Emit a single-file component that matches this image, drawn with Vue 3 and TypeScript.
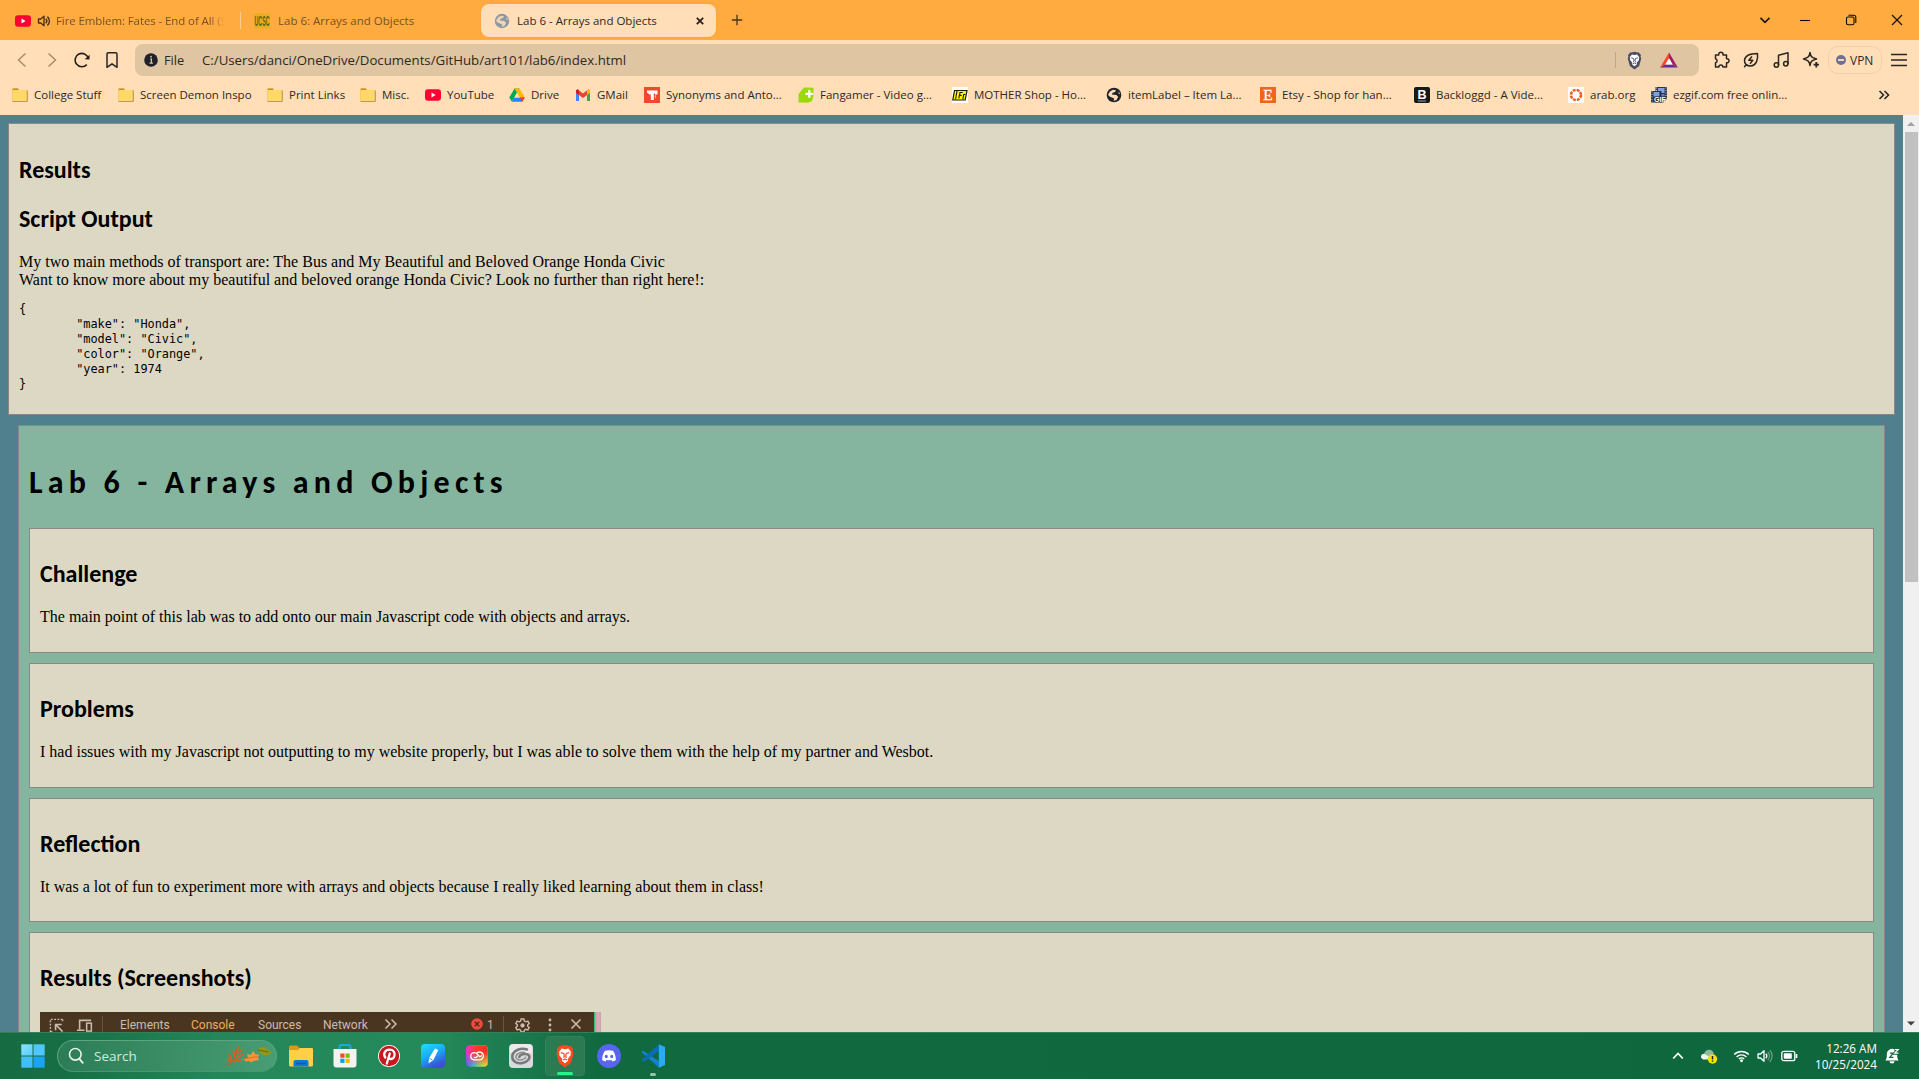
<script setup lang="ts">
interface Glyph {
  box: string
  body: string
}

const line = 'fill="none" stroke="#2b2622" stroke-width="1.5" stroke-linecap="round" stroke-linejoin="round"'
const youtube = '<rect x="0" y="2.2" width="16" height="11.6" rx="3" fill="#ff0033"/><path d="M6.5 5.6v4.8L10.6 8z" fill="#fff"/>'
const folder = '<path d="M.5 1.500h5.400l1.200 1.500h8.400v11H.5z" fill="#d8a02c"/><rect x=".5" y="3" width="14.400" height="11.500" rx="1" fill="#ffd968"/><path d="M.5 14.500h14.800V4" fill="none" stroke="#b89a5c" stroke-width="1"/><path d="M1 2.300h5" stroke="#c98f1c" stroke-width="1.400"/>'
const lion = (mane: string) =>
  `<path d="M12 1l4 1 1-.3 3.200 3.400-.6 1.800.9 2.600-2.600 9.600L12 23.400l-5.900-4.300L3.500 9.500l.9-2.600-.6-1.800L7 1.700l1 .3z" fill="${mane}"/><path d="M12 5.200l3.300-.7 2.700 3.400-.5 1.700.3 1.500-3.200 4.200.6 1.500L12 19.300l-3.200-2.500.6-1.500-3.200-4.200.3-1.500-.5-1.700 2.700-3.400z" fill="#fff"/><path d="M7.800 8.600l3 .9.500 2.600-.7 1.700M16.200 8.600l-3 .9-.5 2.600.7 1.700M10 16l2-1 2 1" fill="none" stroke="${mane}" stroke-width="1.200"/>`

const glyphs: Record<string, Glyph> = {
  youtube: { box: '0 0 16 16', body: youtube },
  folder: { box: '0 0 16 16', body: folder },
  speaker: { box: '0 0 14 14', body: '<path d="M1.500 5H3.800L7 2.300v9.400L3.800 9H1.500z" fill="none" stroke="#4a3215" stroke-width="1.400" stroke-linejoin="round"/><path d="M8.800 4.800a3.200 3.200 0 010 4.400M10.400 2.600a5.800 5.800 0 010 8.800" fill="none" stroke="#4a3215" stroke-width="1.400"/>' },
  ucsc: { box: '0 0 16 16', body: '<rect y=".5" width="16" height="15" fill="#e8ae1c"/><text x="8" y="13" text-anchor="middle" textLength="15" lengthAdjust="spacingAndGlyphs" font-family="Liberation Sans" font-weight="700" font-size="14" fill="#5c6426">UCSC</text>' },
  globe: { box: '0 0 16 16', body: '<circle cx="8" cy="8" r="7.200" fill="#8d97a3"/><path d="M4 4.600l3-1.800 3 .5-1 1.700-2.300.8L5.800 7.500l4.600.6 1.800 2-1.600 2.600-3 1.300.6-2.600-4.600-2L2 7.800z" fill="#fddeb8" opacity=".85"/><path d="M12.300 4l1.800 2.500-1.500.6z" fill="#fddeb8" opacity=".85"/>' },
  darkglobe: { box: '0 0 16 16', body: '<circle cx="8" cy="8" r="7.300" fill="#20242a"/><path d="M4 4.600l3-1.800 3 .5-1 1.700-2.300.8L5.800 7.500l4.600.6 1.800 2-1.600 2.600-3 1.300.6-2.600-4.600-2L2 7.800z" fill="#fdddb6"/><path d="M12.500 4.500l1.600 2-1.300.6z" fill="#fdddb6"/>' },
  drive: { box: '0 0 16 16', body: '<path d="M5.500 1.500h5L5.200 10.700 2.700 14.500.3 10.500z" fill="#00a850"/><path d="M5.500 1.500h5l5.300 9h-5z" fill="#ffba00"/><path d="M5.200 10.500h10.600l-2.500 4.200H2.700z" fill="#2684fc"/><path d="M15.800 10.500h-5l2.500 4.200z" fill="#ea4335"/><path d="M8 5.800l2.700 4.700H5.300z" fill="#fddeb8"/>' },
  gmail: { box: '0 0 16 16', body: '<path d="M1 4v10h3V7z" fill="#4285f4"/><path d="M15 4v10h-3V7z" fill="#34a853"/><path d="M1 3.500l1.600-1.300L8 6.400l5.400-4.200L15 3.500V5.700L8 11 1 5.700z" fill="#ea4335"/><path d="M12 3.300l1.400-1.100L15 3.500v2.200L12 8z" fill="#fbbc04"/><path d="M1 3.500v2.200L4 8V3.300L2.600 2.200z" fill="#c5221f"/>' },
  thesaurus: { box: '0 0 16 16', body: '<rect width="16" height="16" fill="#f4482c"/><path d="M3 3.500h10.500v4H11v-1H9.800V13H6.800V7.500H5.500L3 5.500z" fill="#fff"/><path d="M10.500 9l1.500-1v4z" fill="#fff" opacity=".6"/>' },
  fangamer: { box: '0 0 16 16', body: '<path d="M6 .5L15.500.8V9l-1.500 5-4 1.800L.5 15.500V7z" fill="#9bd90a"/><path d="M10.200 3h2.200v2.800h2.800V8h-2.800v2.800h-2.200V8H7.400V5.800h2.800z" fill="#fff"/>' },
  mother: { box: '0 0 16 16', body: '<rect width="16" height="16" fill="#fff"/><path d="M2.500 3.500H15l-1.800 9.500H.8z" fill="#fff200" stroke="#1c1c00" stroke-width="1.200"/><path d="M5 4L3.500 12.500M6.800 11.300L8 5.500h2.600M7.400 8.400h2.300M10.800 12.500l.9-5h1.600" stroke="#1c1c00" stroke-width="1.100" fill="none"/>' },
  etsy: { box: '0 0 16 16', body: '<rect width="16" height="16" fill="#f1641e"/><text x="8" y="13.300" text-anchor="middle" font-family="Liberation Serif" font-size="15.500" fill="#fff" stroke="#fff" stroke-width=".3">E</text>' },
  backloggd: { box: '0 0 16 16', body: '<rect width="16" height="16" rx="2" fill="#16181c"/><text x="8" y="12" text-anchor="middle" font-family="Liberation Sans" font-weight="700" font-size="12.500" fill="#fff">B</text><path d="M4 14h8" stroke="#8fa3ad"/>' },
  arab: { box: '0 0 16 16', body: '<rect width="16" height="16" fill="#fff"/><circle cx="8" cy="8" r="5" fill="none" stroke="#ee5a24" stroke-width="2.600" stroke-dasharray="2.900 1.030"/>' },
  ezgif: { box: '0 0 16 16', body: '<rect x="4.500" y="0" width="11.500" height="12" fill="#2b3540"/><rect x="7" y="1" width="6.500" height="5" fill="#7da3d8"/><rect x="7" y="7" width="6.500" height="4" fill="#5b80bc"/><path d="M15 .5v12M5.500 .5v12" stroke="#d6dde4" stroke-dasharray="1 1.500"/><rect x="0" y="4" width="10.500" height="11.500" fill="#2b3540"/><rect x="2.500" y="5" width="5.800" height="4.500" fill="#7da3d8"/><path d="M1 4.500v10.500" stroke="#d6dde4" stroke-dasharray="1 1.500"/><text x="9" y="15.300" text-anchor="middle" font-family="Liberation Sans" font-weight="700" font-size="7.200" fill="#fff" stroke="#1f2730" stroke-width=".8" paint-order="stroke">GIF</text>' },
  back: { box: '0 0 16 16', body: '<path d="M11.500 1.500L4.500 8l7 6.500" fill="none" stroke="#a88c6c" stroke-width="1.500"/>' },
  forward: { box: '0 0 16 16', body: '<path d="M4.500 1.500l7 6.500-7 6.500" fill="none" stroke="#a88c6c" stroke-width="1.500"/>' },
  reload: { box: '0 0 16 16', body: '<path d="M12.800 12.600A6.700 6.700 0 1 1 14.300 6.200" fill="none" stroke="#241f1c" stroke-width="1.600"/><path d="M10.700 7.200l4.800.400.100-4.800z" fill="#241f1c"/>' },
  bookmark: { box: '0 0 16 16', body: `<path d="M3 2.200a1.500 1.500 0 011.500-1.500h7a1.500 1.500 0 011.500 1.500V15.300L8 11.800 3 15.300z" ${line}/>` },
  info: { box: '0 0 14 14', body: '<circle cx="7" cy="7" r="6.800" fill="#1f2028"/><path d="M6 6h1.400v4M5.500 10.200h3.400" stroke="#dfc5a2" stroke-width="1.200" fill="none"/><circle cx="7" cy="3.700" r=".9" fill="#dfc5a2"/>' },
  shield: { box: '0 0 24 24', body: lion('#4b4e63') },
  bat: { box: '0 0 20 18', body: '<path d="M10 .5L0 17.500l6-3.500 4-7z" fill="#ff4724"/><path d="M10 .5l10 17-6-3.500-4-7z" fill="#9e1f63"/><path d="M0 17.500h20L14 14H6z" fill="#662d91"/><path d="M10 7l4.200 7.200H5.800z" fill="#fff"/>' },
  puzzle: { box: '0 0 18 18', body: `<path d="M3.500 4h3.300a2.200 2.200 0 114.200 0h3.500v3.700a2.100 2.100 0 110 4.100V16h-3.600a2 2 0 00-4 0H3.500v-4.200a2.100 2.100 0 000-4.100z" ${line}/>` },
  leaf: { box: '0 0 18 18', body: `<path d="M15.500 2.500c.6 5.500-.8 12-7 12.500-4 0-6.200-2.500-6-5.700C3 4.500 8.500 2.500 15.500 2.500zM4.300 13.500L2.500 15.700" ${line}/><path d="M10 5.500L6.800 9.300h4L8 12.700" fill="none" stroke="#2b2622" stroke-width="1.500" stroke-linejoin="round"/>` },
  music: { box: '0 0 18 18', body: `<path d="M6.500 14V4.200L16 1.800V12.500" ${line}/><circle cx="4.400" cy="14" r="2.200" ${line}/><circle cx="13.800" cy="12.800" r="2.200" ${line}/>` },
  sparkle: { box: '0 0 18 18', body: `<path d="M8 1.500c.7 4 1.500 5 6.500 6.500-5 1.400-5.800 2.400-6.500 6.500-.7-4.100-1.500-5.100-6.500-6.500C6.500 6.500 7.300 5.500 8 1.500z" ${line}/><path d="M14.300 11v5.400M11.600 13.700H17" stroke="#2b2622" stroke-width="1.800"/>` },
  burger: { box: '0 0 18 14', body: '<path d="M1 1.500h16M1 7h16M1 12.500h16" stroke="#2b2622" stroke-width="1.500"/>' },
  close: { box: '0 0 12 12', body: '<path d="M2.800 2.800l6.400 6.400M9.200 2.800L2.800 9.200" stroke="#2a221c" stroke-width="1.800"/>' },
  plus: { box: '0 0 12 12', body: '<path d="M6 .8v10.400M.8 6h10.400" stroke="#4d3518" stroke-width="1.300"/>' },
  down: { box: '0 0 12 12', body: '<path d="M1.500 3.800L6 8.300l4.500-4.500" fill="none" stroke="#1f1608" stroke-width="1.700"/>' },
  minimize: { box: '0 0 12 12', body: '<path d="M1 6.500h10" stroke="#100a00" stroke-width="1.100"/>' },
  restore: { box: '0 0 12 12', body: '<rect x="1.500" y="3" width="7.500" height="7.800" rx="1.500" fill="none" stroke="#100a00" stroke-width="1.100"/><path d="M3.500 1.300h5.300a2 2 0 012 2V9" fill="none" stroke="#100a00" stroke-width="1.100"/>' },
  exit: { box: '0 0 12 12', body: '<path d="M1 1l10 10M11 1L1 11" stroke="#100a00" stroke-width="1.100"/>' },
  more: { box: '0 0 12 12', body: '<path d="M1.500 2l4 4-4 4M6.500 2l4 4-4 4" fill="none" stroke="#2b2622" stroke-width="1.600"/>' },
  inspect: { box: '0 0 16 16', body: '<path d="M1.500 15V1.500H15" fill="none" stroke="#cbbcae" stroke-width="1.500" stroke-dasharray="2 1.500"/><path d="M14.500 1.500V5M1.500 14.500H5" stroke="#cbbcae" stroke-width="1.500" stroke-dasharray="2 1.500"/><path d="M7 13V7h6.500M7.500 7.500l7 7" fill="none" stroke="#cbbcae" stroke-width="1.700"/>' },
  device: { box: '0 0 17 16', body: '<path d="M15.500 2.500H3.300v9.500M.5 13h8" fill="none" stroke="#cbbcae" stroke-width="1.700"/><rect x="10.800" y="5.500" width="5" height="8.500" fill="none" stroke="#cbbcae" stroke-width="1.600"/>' },
  chevrons: { box: '0 0 14 12', body: '<path d="M1.500 1.500L6 6l-4.500 4.500M7.500 1.500L12 6l-4.500 4.500" fill="none" stroke="#cbbcae" stroke-width="1.500"/>' },
  error: { box: '0 0 12 12', body: '<circle cx="6" cy="6" r="5.800" fill="#f04a3e"/><path d="M3.800 3.800l4.400 4.400M8.200 3.800L3.800 8.200" stroke="#4a2a1c" stroke-width="1.300"/>' },
  gear: { box: '0 0 16 16', body: '<path d="M6.500 1h3l.5 2.200 1.500.9 2.200-.7 1.400 2.500L13.500 7.300v1.500l1.600 1.400-1.400 2.500-2.200-.7-1.500.9L9.500 15h-3L6 12.900l-1.500-.9-2.200.7L.9 10.200l1.600-1.400V7.300L.9 5.900l1.400-2.500 2.200.7L6 3.200z" fill="none" stroke="#cbbcae" stroke-width="1.500"/><circle cx="8" cy="8" r="2.300" fill="#cbbcae"/>' },
  dots: { box: '0 0 4 14', body: '<g fill="#cbbcae"><circle cx="2" cy="2" r="1.400"/><circle cx="2" cy="7" r="1.400"/><circle cx="2" cy="12" r="1.400"/></g>' },
  cross: { box: '0 0 12 12', body: '<path d="M1.500 1.500l9 9M10.500 1.500l-9 9" stroke="#cbbcae" stroke-width="1.600"/>' },
  windows: { box: '0 0 24 24', body: '<defs><linearGradient id="win" x1="0" y1="0" x2="1" y2="1"><stop offset="0" stop-color="#8be4ff"/><stop offset="1" stop-color="#5accfa"/></linearGradient></defs><rect x=".3" y=".3" width="11.200" height="11.200" fill="url(#win)"/><rect x="12.500" y=".3" width="11.200" height="11.200" fill="#4fc7fb"/><rect x=".3" y="12.500" width="11.200" height="11.200" fill="#3fbffb"/><rect x="12.500" y="12.500" width="11.200" height="11.200" fill="#1ba4f5"/>' },
  search: { box: '0 0 16 18', body: '<circle cx="7.300" cy="7.300" r="5.800" fill="none" stroke="#e6f3ea" stroke-width="1.600"/><path d="M11.200 11.700l4 4.600" stroke="#e6f3ea" stroke-width="1.800"/>' },
  leaves: { box: '0 0 46 22', body: '<path d="M1.500 20.500c4-3 8-8 10-17" fill="none" stroke="#c9581c" stroke-width="1.100"/><path d="M3 9.500l2.500 5.500M7.300 5.500l1.200 6M12 2l-1 4M16 4.500l-5 4M17 9.500l-7 3.500M14.500 15l-7 1.500M2 14l2.500 3.500" stroke="#d5601f" stroke-width="1.900" stroke-linecap="round"/><path d="M18 14l4-1.500-1-3.500 3.500 1 3-4 1.500 3 4.500 1-2 2.500 1.500 2.500-5 1-3 1.500-2-1.500-3.500.5z" fill="#f7943a"/><path d="M14.500 15l3.500-1L31 11.500" fill="none" stroke="#d97420" stroke-width="1"/><path d="M31.500 4.500c3-3 7-2.500 9.500-1L45.500 7c-2 3-5 4.500-8 3-2-.5-3-1.500-6-5.500z" fill="#91981a"/><path d="M31.500 5l11 2" stroke="#5f6d12" stroke-width="1"/>' },
  explorer: { box: '0 0 24 24', body: '<path d="M0 3a1.500 1.500 0 011.500-1.500H8L10.500 4H22v6H0z" fill="#d99a16"/><path d="M0 6h9l2-2h12a1 1 0 011 1v16a1.500 1.500 0 01-1.500 1.500h-21A1.500 1.500 0 010 21z" fill="#ffcf48"/><path d="M4.500 22.500V18a2 2 0 012-2h11a2 2 0 012 2v4.500z" fill="#0f78cf"/><path d="M7 19.500h10" stroke="#0b5ba5" stroke-width="1.500"/>' },
  store: { box: '0 0 24 24', body: '<path d="M6.500 6V3a2 2 0 012-2h7a2 2 0 012 2v3" fill="none" stroke="#1fa4ea" stroke-width="2"/><path d="M.5 5h23v15.500a3 3 0 01-3 3h-17a3 3 0 01-3-3z" fill="#f3f3f1"/><path d="M7.300 9.500h4.200v4.200H7.300z" fill="#f04e26"/><path d="M12.500 9.500h4.200v4.200h-4.200z" fill="#7fb80e"/><path d="M7.300 14.700h4.200v4.200H7.300z" fill="#03a2ec"/><path d="M12.500 14.700h4.200v4.200h-4.200z" fill="#fbb604"/>' },
  pinterest: { box: '0 0 24 24', body: '<circle cx="12" cy="12" r="11" fill="#fff"/><circle cx="12" cy="12" r="10.200" fill="#c8171e"/><path d="M8.300 13.500C5.800 10 8 5.700 12.500 5.700c4 0 5.800 3 5 6-.8 3.400-4.500 4.200-5.700 2.200M12.800 9.500L9.800 19.500" fill="none" stroke="#fff" stroke-width="2.300" stroke-linecap="round"/>' },
  pen: { box: '0 0 24 24', body: '<defs><linearGradient id="ink" x1="0" y1="0" x2=".5" y2="1"><stop offset="0" stop-color="#1fe0ff"/><stop offset=".55" stop-color="#1aa6f5"/><stop offset="1" stop-color="#3c50d8"/></linearGradient></defs><rect width="24" height="24" rx="4" fill="url(#ink)"/><path d="M14 4.500l3.300 1.600L12.500 16l-5 3.500.6-5.500z" fill="#fff"/><path d="M8.500 14.300l3 1.700" stroke="#37a8f0"/><path d="M10 20c3 1 5-1 8-.5" fill="none" stroke="#2b62d8" stroke-width="1.500"/>' },
  cloud: { box: '0 0 24 24', body: '<defs><linearGradient id="cct" x1="0" y1="0" x2="1" y2="0"><stop offset="0" stop-color="#f92fc5"/><stop offset=".45" stop-color="#ff3a2a"/><stop offset="1" stop-color="#ff2a2a"/></linearGradient><linearGradient id="ccb" x1="0" y1="0" x2="1" y2="0"><stop offset="0" stop-color="#4a63ff"/><stop offset=".4" stop-color="#45c8c8"/><stop offset=".7" stop-color="#a8e05a"/><stop offset="1" stop-color="#f8e22a"/></linearGradient><linearGradient id="ccf" x1="0" y1="0" x2="0" y2="1"><stop offset=".35" stop-color="#fff"/><stop offset=".95" stop-color="#000"/></linearGradient><mask id="ccm"><rect width="24" height="24" fill="url(#ccf)"/></mask></defs><rect x="1.200" y="1.200" width="21.600" height="21.600" rx="4" fill="url(#ccb)"/><rect x="1.200" y="1.200" width="21.600" height="21.600" rx="4" fill="url(#cct)" mask="url(#ccm)"/><path d="M9.300 15.800a3.600 3.600 0 110-7.200c2.400 0 3.200 1.500 4.700 3.400.8 1 2.400.8 2.400-.7M10 15.800h4.600a3.900 3.900 0 10-3.200-6.200M9.300 13.500c1.400.6 2.300-.2 3-1.200" fill="none" stroke="#fff" stroke-width="1.300" stroke-linecap="round"/>' },
  clip: { box: '0 0 24 24', body: '<rect width="24" height="24" rx="4" fill="#d9dadb"/><path d="M1 4a4 4 0 014-4h14a4 4 0 014 4v5H1z" fill="#f2f2f2" opacity=".7"/><path d="M18 5.500C11.500 3.500 3.500 6.500 3.300 12.500c-.2 5.500 5.500 7.500 10.200 6.500 5.500-1 8-5 6.500-7.500-1.800-2.700-9-1.700-9.700 1.500" fill="none" stroke="#77797b" stroke-width="2.500" stroke-linecap="round"/><path d="M15.500 8.500c-4-.8-8.500 1-8.500 4.500 0 2.700 3.500 3.300 6 2.700 2.300-.5 3.500-1.500 3.700-2.500" fill="none" stroke="#8b8d8f" stroke-width="1.400" stroke-linecap="round"/>' },
  brave: { box: '0 0 24 24', body: lion('#fb4a1e') },
  discord: { box: '0 0 24 24', body: '<circle cx="12" cy="12" r="12" fill="#5865f2"/><path d="M8 6.800c2.500-.7 5.500-.7 8 0 1.800 2.500 3 6 2.800 9.200-1.300 1-2.500 1.400-3.300 1.500l-1-1.600c-1.500.4-3.500.4-5 0l-1 1.600c-.8-.1-2-.5-3.300-1.500C5 12.800 6.200 9.300 8 6.800z" fill="#fff"/><ellipse cx="9.300" cy="12.500" rx="1.500" ry="1.700" fill="#5865f2"/><ellipse cx="14.700" cy="12.500" rx="1.500" ry="1.700" fill="#5865f2"/>' },
  vscode: { box: '0 0 24 24', body: '<path d="M1.800 6.500L.3 8l17.500 15.500V17z" fill="#0f83cf"/><path d="M17.800.5v6.700L2.300 18.300.3 16z" fill="#0a6cb4"/><path d="M17.800.3L24 3v18l-6.200 2.800z" fill="#2caaf0"/>' },
  up: { box: '0 0 12 12', body: '<path d="M1.200 8.500L6 3.500l4.800 5" fill="none" stroke="#fff" stroke-width="1.700"/>' },
  onedrive: { box: '0 0 18 16', body: '<path d="M1 9.500a3.500 3.500 0 013.200-4C5 2.500 8 1 10.500 2c2 .5 3 2 3.300 4L9 10.500H2.500z" fill="#8fb9a2"/><path d="M1 9.500a3 3 0 013.500-3.500L9 8.500l-1.500 3H3z" fill="#edf5ef"/><circle cx="12.500" cy="11" r="4.700" fill="#ffe000"/><path d="M12.500 8v3.600M12.500 12.500v1.300" stroke="#222" stroke-width="1.500"/>' },
  wifi: { box: '0 0 18 14', body: '<g fill="none" stroke="#fff" stroke-width="1.500"><path d="M1.300 5.500a10.800 10.800 0 0115.400 0M3.800 8a7.300 7.300 0 0110.400 0M6.200 10.300a4 4 0 015.600 0"/></g><circle cx="9" cy="12" r="1.500" fill="#fff"/>' },
  volume: { box: '0 0 17 14', body: '<path d="M1 5h2.500L7 1.700v10.600L3.500 9H1z" fill="none" stroke="#fff" stroke-width="1.300" stroke-linejoin="round"/><path d="M8.800 4.800a3.200 3.200 0 010 4.400" fill="none" stroke="#fff" stroke-width="1.300"/><path d="M10.800 3a6 6 0 010 8M12.800 1.200a8.600 8.600 0 010 11.600" fill="none" stroke="#fff" stroke-opacity=".4" stroke-width="1.200"/>' },
  battery: { box: '0 0 17 12', body: '<rect x=".8" y="1.300" width="13" height="9.400" rx="2" fill="none" stroke="#fff" stroke-width="1.300"/><rect x="2.800" y="3.300" width="8" height="5.400" rx=".8" fill="#fff"/><path d="M15.500 4v4" stroke="#fff" stroke-width="1.700"/>' },
  bell: { box: '0 0 15 16', body: '<path d="M9 1.200A5.300 5.300 0 001.800 6v3.500L.5 12.500h13L12.200 9.500V7z" fill="#fff"/><path d="M4.500 13.300a2.500 2.200 0 005 0z" fill="#fff"/><path d="M4.800 5.200h3.400L4.800 9.300h3.600" fill="none" stroke="#11693f" stroke-width="1.200"/><path d="M9.700 1.500h3.500l-3.500 3.700h3.800" fill="none" stroke="#11693f" stroke-width="3"/><path d="M9.700 1.500h3.500l-3.500 3.700h3.800" fill="none" stroke="#fff" stroke-width="1.200"/>' },
}

const bookmarks = [
  { icon: 'folder', label: 'College Stuff', span: 106 },
  { icon: 'folder', label: 'Screen Demon Inspo', span: 149 },
  { icon: 'folder', label: 'Print Links', span: 93 },
  { icon: 'folder', label: 'Misc.', span: 65 },
  { icon: 'youtube', label: 'YouTube', span: 84 },
  { icon: 'drive', label: 'Drive', span: 66 },
  { icon: 'gmail', label: 'GMail', span: 69 },
  { icon: 'thesaurus', label: 'Synonyms and Anto...', span: 154 },
  { icon: 'fangamer', label: 'Fangamer - Video g...', span: 154 },
  { icon: 'mother', label: 'MOTHER Shop - Ho...', span: 154 },
  { icon: 'darkglobe', label: 'itemLabel – Item La...', span: 154 },
  { icon: 'etsy', label: 'Etsy - Shop for han...', span: 154 },
  { icon: 'backloggd', label: 'Backloggd - A Vide...', span: 154 },
  { icon: 'arab', label: 'arab.org', span: 83 },
  { icon: 'ezgif', label: 'ezgif.com free onlin...', span: 150 },
]

const sections = [
  { title: 'Challenge', text: 'The main point of this lab was to add onto our main Javascript code with objects and arrays.' },
  { title: 'Problems', text: 'I had issues with my Javascript not outputting to my website properly, but I was able to solve them with the help of my partner and Wesbot.' },
  { title: 'Reflection', text: 'It was a lot of fun to experiment more with arrays and objects because I really liked learning about them in class!' },
]

const car = `{
\t"make": "Honda",
\t"model": "Civic",
\t"color": "Orange",
\t"year": 1974
}`

const tools = ['puzzle', 'leaf', 'music', 'sparkle']
const apps = ['explorer', 'store', 'pinterest', 'pen', 'cloud', 'clip', 'brave', 'discord', 'vscode']
</script>

<template>
  <div class="desktop">
    <header class="chrome">
      <div class="tabs">
        <div class="tab first">
          <svg class="i16" :viewBox="glyphs.youtube.box" v-html="glyphs.youtube.body" />
          <svg class="i14" :viewBox="glyphs.speaker.box" v-html="glyphs.speaker.body" />
          <span class="fade">Fire Emblem: Fates - End of All (S</span>
        </div>
        <div class="tab second">
          <svg class="i16" :viewBox="glyphs.ucsc.box" v-html="glyphs.ucsc.body" />
          <span>Lab 6: Arrays and Objects</span>
        </div>
        <div class="tab active">
          <svg class="i16" :viewBox="glyphs.globe.box" v-html="glyphs.globe.body" />
          <span>Lab 6 - Arrays and Objects</span>
          <svg class="i12 tab-close" :viewBox="glyphs.close.box" v-html="glyphs.close.body" />
        </div>
        <svg class="i12 plus" :viewBox="glyphs.plus.box" v-html="glyphs.plus.body" />
        <div class="controls">
          <svg class="i12 chev" :viewBox="glyphs.down.box" v-html="glyphs.down.body" />
          <svg class="i12" :viewBox="glyphs.minimize.box" v-html="glyphs.minimize.body" />
          <svg class="i12" :viewBox="glyphs.restore.box" v-html="glyphs.restore.body" />
          <svg class="i12" :viewBox="glyphs.exit.box" v-html="glyphs.exit.body" />
        </div>
      </div>

      <div class="toolbar">
        <div class="nav">
          <svg v-for="n in ['back', 'forward', 'reload', 'bookmark']" :key="n" class="i16" :viewBox="glyphs[n].box" v-html="glyphs[n].body" />
        </div>
        <div class="address">
          <svg class="i14" :viewBox="glyphs.info.box" v-html="glyphs.info.body" />
          <span class="scheme">File</span>
          <span class="url">C:/Users/danci/OneDrive/Documents/GitHub/art101/lab6/index.html</span>
          <i class="rule" />
          <svg class="shield" :viewBox="glyphs.shield.box" v-html="glyphs.shield.body" />
          <svg class="bat" :viewBox="glyphs.bat.box" v-html="glyphs.bat.body" />
        </div>
        <div class="tools">
          <svg v-for="n in tools" :key="n" class="i18" :viewBox="glyphs[n].box" v-html="glyphs[n].body" />
        </div>
        <div class="vpn"><b class="off" /><span>VPN</span></div>
        <svg class="burger" :viewBox="glyphs.burger.box" v-html="glyphs.burger.body" />
      </div>

      <nav class="bookmarks">
        <div v-for="b in bookmarks" :key="b.label" class="mark" :style="{ width: b.span + 'px' }">
          <svg class="i16" :viewBox="glyphs[b.icon].box" v-html="glyphs[b.icon].body" />
          <span>{{ b.label }}</span>
        </div>
        <svg class="i12 overflow" :viewBox="glyphs.more.box" v-html="glyphs.more.body" />
      </nav>
    </header>

    <main class="viewport">
      <div class="page">
        <div class="box output">
          <h2>Results</h2>
          <h2>Script Output</h2>
          <p>My two main methods of transport are: The Bus and My Beautiful and Beloved Orange Honda Civic<br>Want to know more about my beautiful and beloved orange Honda Civic? Look no further than right here!:</p>
          <pre>{{ car }}</pre>
        </div>
        <div class="lab">
          <h1>Lab 6 - Arrays and Objects</h1>
          <section v-for="s in sections" :key="s.title" class="box part">
            <h2>{{ s.title }}</h2>
            <p>{{ s.text }}</p>
          </section>
          <section class="box part">
            <h2>Results (Screenshots)</h2>
            <div class="shot">
              <div class="devtools">
                <svg class="inspect" :viewBox="glyphs.inspect.box" v-html="glyphs.inspect.body" />
                <svg class="device" :viewBox="glyphs.device.box" v-html="glyphs.device.body" />
                <i class="bar" />
                <span class="elements">Elements</span>
                <span class="console">Console</span>
                <span class="sources">Sources</span>
                <span class="network">Network</span>
                <svg class="chevrons" :viewBox="glyphs.chevrons.box" v-html="glyphs.chevrons.body" />
                <svg class="i12 error" :viewBox="glyphs.error.box" v-html="glyphs.error.body" />
                <span class="count">1</span>
                <i class="bar second-bar" />
                <svg class="gear" :viewBox="glyphs.gear.box" v-html="glyphs.gear.body" />
                <svg class="dots" :viewBox="glyphs.dots.box" v-html="glyphs.dots.body" />
                <svg class="i12" :viewBox="glyphs.cross.box" v-html="glyphs.cross.body" />
              </div>
              <div class="edge" />
            </div>
          </section>
        </div>
      </div>
      <div class="scrollbar">
        <svg viewBox="0 0 16 17"><path d="M4 11L8 7l4 4z" fill="#a0a0a0" /></svg>
        <div class="thumb" />
        <svg class="bottom" viewBox="0 0 16 17"><path d="M4 6.500L8 10.500l4-4z" fill="#404040" /></svg>
      </div>
    </main>

    <footer class="taskbar">
      <svg class="start" :viewBox="glyphs.windows.box" v-html="glyphs.windows.body" />
      <div class="search">
        <svg class="lens" :viewBox="glyphs.search.box" v-html="glyphs.search.body" />
        <span>Search</span>
        <svg class="leaves" :viewBox="glyphs.leaves.box" v-html="glyphs.leaves.body" />
      </div>
      <div class="apps">
        <div v-for="a in apps" :key="a" class="app" :class="a">
          <svg :viewBox="glyphs[a].box" v-html="glyphs[a].body" />
        </div>
      </div>
      <div class="tray">
        <svg class="i12" :viewBox="glyphs.up.box" v-html="glyphs.up.body" />
        <svg class="onedrive" :viewBox="glyphs.onedrive.box" v-html="glyphs.onedrive.body" />
        <svg class="wifi" :viewBox="glyphs.wifi.box" v-html="glyphs.wifi.body" />
        <svg class="volume" :viewBox="glyphs.volume.box" v-html="glyphs.volume.body" />
        <svg class="battery" :viewBox="glyphs.battery.box" v-html="glyphs.battery.body" />
        <div class="clock"><span>12:26 AM</span><span>10/25/2024</span></div>
        <svg class="bell" :viewBox="glyphs.bell.box" v-html="glyphs.bell.body" />
      </div>
    </footer>
  </div>
</template>

<style>
html, body { margin: 0; overflow: hidden; }
</style>

<style scoped>
* { box-sizing: border-box; }
svg { display: block; flex: none; }
.desktop { width: 1919px; height: 1079px; display: flex; flex-direction: column; overflow: hidden; font-family: "Open Sans", "Noto Sans", sans-serif; }
.i12 { width: 12px; height: 12px; }
.i14 { width: 14px; height: 14px; }
.i16 { width: 16px; height: 16px; }
.i18 { width: 18px; height: 18px; }

.chrome { height: 115px; flex: none; background: #ffdeb8; color: #2e2823; font-size: 11.5px; white-space: nowrap; }
.tabs { height: 40px; display: flex; align-items: center; background: #ffab40; color: #785124; }
.tab { flex: none; height: 33px; margin-top: 1px; display: flex; align-items: center; }
.first { width: 241px; padding-left: 15px; gap: 6px; border-right: 1px solid #ffd091; height: 17px; }
.fade { margin-left: -1px; letter-spacing: -.1px; -webkit-mask-image: linear-gradient(90deg, #000 90%, transparent 99%); mask-image: linear-gradient(90deg, #000 90%, transparent 99%); }
.second { width: 240px; padding-left: 13px; gap: 8px; }
.active { width: 235px; padding-left: 13px; gap: 7px; border-radius: 8px; background: #ffdeb8; color: #2e2823; box-shadow: 0 0 2px #d98f3566; }
.tab-close { margin-left: auto; margin-right: 10px; }
.plus { margin-left: 15px; }
.controls { margin-left: auto; display: flex; align-items: center; padding-right: 16px; gap: 34px; }
.chev { margin-right: -6px; }

.toolbar { height: 40px; display: flex; align-items: center; }
.nav { width: 135px; padding-left: 14px; display: flex; gap: 14px; }
.address { width: 1564px; height: 32px; border-radius: 8px; background: #dfc5a2; display: flex; align-items: center; padding-left: 9px; font-size: 13.240px; }
.scheme { margin-left: 6px; width: 38px; font-size: 12.800px; }
.rule { width: 1px; height: 16px; background: #b9aa96; margin-left: auto; }
.shield { width: 19px; height: 19px; margin-left: 9px; }
.bat { width: 18px; height: 16px; margin: 0 21px 0 16px; }
.tools { display: flex; gap: 12px; margin-left: 13px; }
.vpn { width: 54px; height: 28px; margin-left: 8px; border: 1px solid #f3cfa4; border-radius: 10px; display: flex; align-items: center; gap: 4px; padding-left: 7px; font-size: 12px; }
.off { width: 10px; height: 10px; border-radius: 50%; background: linear-gradient(#e9d7c8, #e9d7c8) center / 6px 2px no-repeat #6f7191; }
.burger { width: 18px; height: 14px; margin-left: 8px; }
.bookmarks { height: 30px; display: flex; align-items: center; padding-left: 12px; }
.mark { flex: none; display: flex; align-items: center; gap: 6px; }
.mark span { margin-top: -1px; }
.overflow { margin-left: auto; margin-right: 29px; }

.viewport { height: 917px; flex: none; display: flex; overflow: hidden; }
.page { width: 1903px; flex: none; background: #50808e; padding: 8px; color: #000; font: 16px/18px "Liberation Serif", serif; }
.scrollbar { width: 16px; flex: none; background: #f0f0f0; display: flex; flex-direction: column; }
.scrollbar svg { width: 16px; height: 17px; }
.thumb { width: 13px; height: 450px; margin-left: 2px; background: #c1c1c1; }
.bottom { margin-top: auto; }
.box { background: #ddd8c4; border: 1px solid #888; padding: 10px; }
.output { height: 292px; padding-top: 11px; }
h1, h2 { font-family: Carlito, Lato, sans-serif; font-weight: 700; }
h2 { font-size: 24px; line-height: 29px; margin: 20px 0; }
.box h2 + h2 { margin-top: -1px; }
.output h2:first-child { margin-bottom: 21px; }
p { margin: 0; }
pre { font: 11.870px/15px "DejaVu Sans Mono", monospace; margin: 13px 0 0; tab-size: 8; }
.lab { margin: 10px 10px 0; border: 1px solid #888; border-bottom: 0; background: #85b59e; padding: 10px 10px 0; height: 700px; }
h1 { font-size: 32px; line-height: 49px; letter-spacing: 5.200px; margin: 22px 0 21px; }
.part { height: 124.840px; margin-bottom: 10px; }
.part:last-child { height: 200px; }
.shot { display: flex; height: 60px; }
.devtools { width: 555px; height: 60px; background: #4a3520; display: flex; align-items: flex-start; padding: 4px 0 0 9px; font: 12px/16px Roboto, sans-serif; color: #cbbcae; border-right: 1px solid #2fc775; }
.devtools span { margin-top: 1px; }
.devtools svg { margin-top: 2px; }
.edge { width: 6px; background: linear-gradient(90deg, #c9929f, #dfadb9 50%, #cf9fae); }
.inspect, .device { width: 15px; height: 15px; }
.device { width: 17px; margin-left: 12px; }
.bar { width: 1px; height: 16px; background: #6a543f; margin: 0 17px 0 9px; }
.elements { width: 71px; } .console { width: 67px; color: #f5ac5c; } .sources { width: 65px; } .network { width: 61px; }
.chevrons { width: 14px; height: 12px; }
.error { margin-left: 73px; }
.count { margin-left: 4px; width: 8px; }
.second-bar { margin: 0 11px 0 8px; }
.gear { width: 15px; height: 15px; }
.dots { width: 4px; height: 14px; margin: 0 18px 0 18px; }

.taskbar { height: 47px; flex: none; display: flex; align-items: center; border-top: 1px solid #367e59; background: linear-gradient(90deg, #176b43 0, #176e45 60px, #23875a 220px, #258a5a 430px, #1a794d 520px, #11693f 600px, #0f683d 100%); color: #fff; }
.start { width: 24px; height: 24px; margin-left: 21px; }
.search { width: 220px; height: 32px; margin-left: 12px; border-radius: 16px; border: 1px solid #5ba580; border-bottom-color: #48966f; background: linear-gradient(90deg, #2c7d57, #489d74); display: flex; align-items: center; padding-left: 10px; font-size: 13.500px; color: #d5eadd; }
.lens { width: 16px; height: 18px; margin-right: 10px; }
.leaves { width: 46px; height: 22px; margin-left: auto; margin-right: 4px; }
.apps { display: flex; gap: 4px; margin-left: 4px; }
.app { width: 40px; height: 40px; display: flex; align-items: center; justify-content: center; border-radius: 4px; position: relative; }
.app svg { width: 24px; height: 24px; }
.brave { background: #2a7a52; border: 1px solid #348058; }
.brave::after, .vscode::after { content: ""; position: absolute; bottom: 0; width: 16px; height: 3px; border-radius: 2px; background: #24f588; }
.vscode::after { width: 6px; background: #9dbfac; }
.tray { margin-left: auto; display: flex; align-items: center; padding-right: 19px; }
.onedrive { width: 18px; height: 16px; margin-left: 16px; }
.wifi { width: 17px; height: 14px; margin-left: 15px; }
.volume { width: 17px; height: 14px; margin-left: 7px; }
.battery { width: 17px; height: 12px; margin-left: 7px; }
.clock { display: flex; flex-direction: column; align-items: flex-end; width: 79px; font-size: 11.700px; line-height: 16px; }
.bell { width: 15px; height: 16px; margin-left: 8px; }
</style>
